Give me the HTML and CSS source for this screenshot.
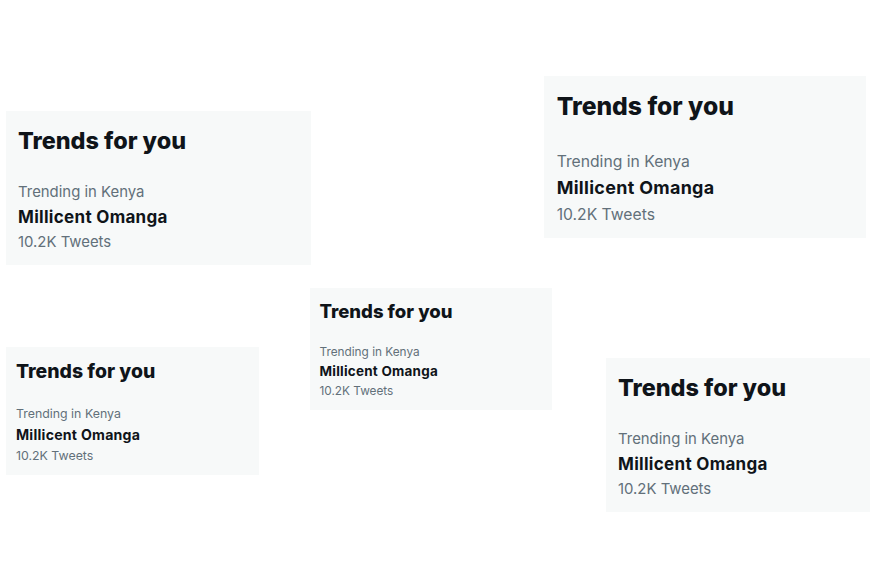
FILE: index.html
```html
<!DOCTYPE html>
<html lang="en">
<head>
<meta charset="utf-8">
<title>Trends for you</title>
<link rel="stylesheet" href="styles.css">
</head>
<body>
<main class="canvas">
  <section class="card card-a">
    <h2 class="title">Trends for you</h2>
    <div class="trend">
      <div class="location">Trending in Kenya</div>
      <div class="name">Millicent Omanga</div>
      <div class="count">10.2K Tweets</div>
    </div>
  </section>
  <section class="card card-b">
    <h2 class="title">Trends for you</h2>
    <div class="trend">
      <div class="location">Trending in Kenya</div>
      <div class="name">Millicent Omanga</div>
      <div class="count">10.2K Tweets</div>
    </div>
  </section>
  <section class="card card-c">
    <h2 class="title">Trends for you</h2>
    <div class="trend">
      <div class="location">Trending in Kenya</div>
      <div class="name">Millicent Omanga</div>
      <div class="count">10.2K Tweets</div>
    </div>
  </section>
  <section class="card card-d">
    <h2 class="title">Trends for you</h2>
    <div class="trend">
      <div class="location">Trending in Kenya</div>
      <div class="name">Millicent Omanga</div>
      <div class="count">10.2K Tweets</div>
    </div>
  </section>
  <section class="card card-e">
    <h2 class="title">Trends for you</h2>
    <div class="trend">
      <div class="location">Trending in Kenya</div>
      <div class="name">Millicent Omanga</div>
      <div class="count">10.2K Tweets</div>
    </div>
  </section>
</main>
</body>
</html>
```
FILE: styles.css
```css
html, body {
  margin: 0;
  padding: 0;
  overflow: hidden;
  background: #ffffff;
}

body {
  font-family: Inter, "Noto Sans", "Liberation Sans", sans-serif;
  color: #0f1419;
}

.canvas {
  position: relative;
  width: 870px;
  height: 570px;
  overflow: hidden;
}

.card {
  --s: 1;
  position: absolute;
  box-sizing: border-box;
  width: calc(305px * var(--s));
  padding: calc(15.6px * var(--s)) calc(12px * var(--s)) calc(10px * var(--s));
  background: #f7f9f9;
}

.card-a { --s: 1; left: 6px; top: 111px; }
.card-b { --s: 1.055; left: 544px; top: 76px; }
.card-c { --s: 0.83; left: 6px; top: 347px; }
.card-d { --s: 0.792; left: 310px; top: 288px; }
.card-e { --s: 1; left: 606px; top: 358px; }

.title {
  margin: 0;
  font-size: calc(23.4px * var(--s));
  line-height: calc(28px * var(--s));
  font-weight: 800;
  color: #0f1419;
  letter-spacing: 0;
}

.trend {
  display: flex;
  flex-direction: column;
  margin-top: calc(25.4px * var(--s));
}

.location,
.count {
  font-size: calc(14.9px * var(--s));
  line-height: calc(25px * var(--s));
  color: #62707a;
  font-weight: 400;
}

.name {
  font-size: calc(17px * var(--s));
  line-height: calc(25px * var(--s));
  font-weight: 700;
  letter-spacing: calc(0.3px * var(--s));
  color: #0f1419;
}
```
